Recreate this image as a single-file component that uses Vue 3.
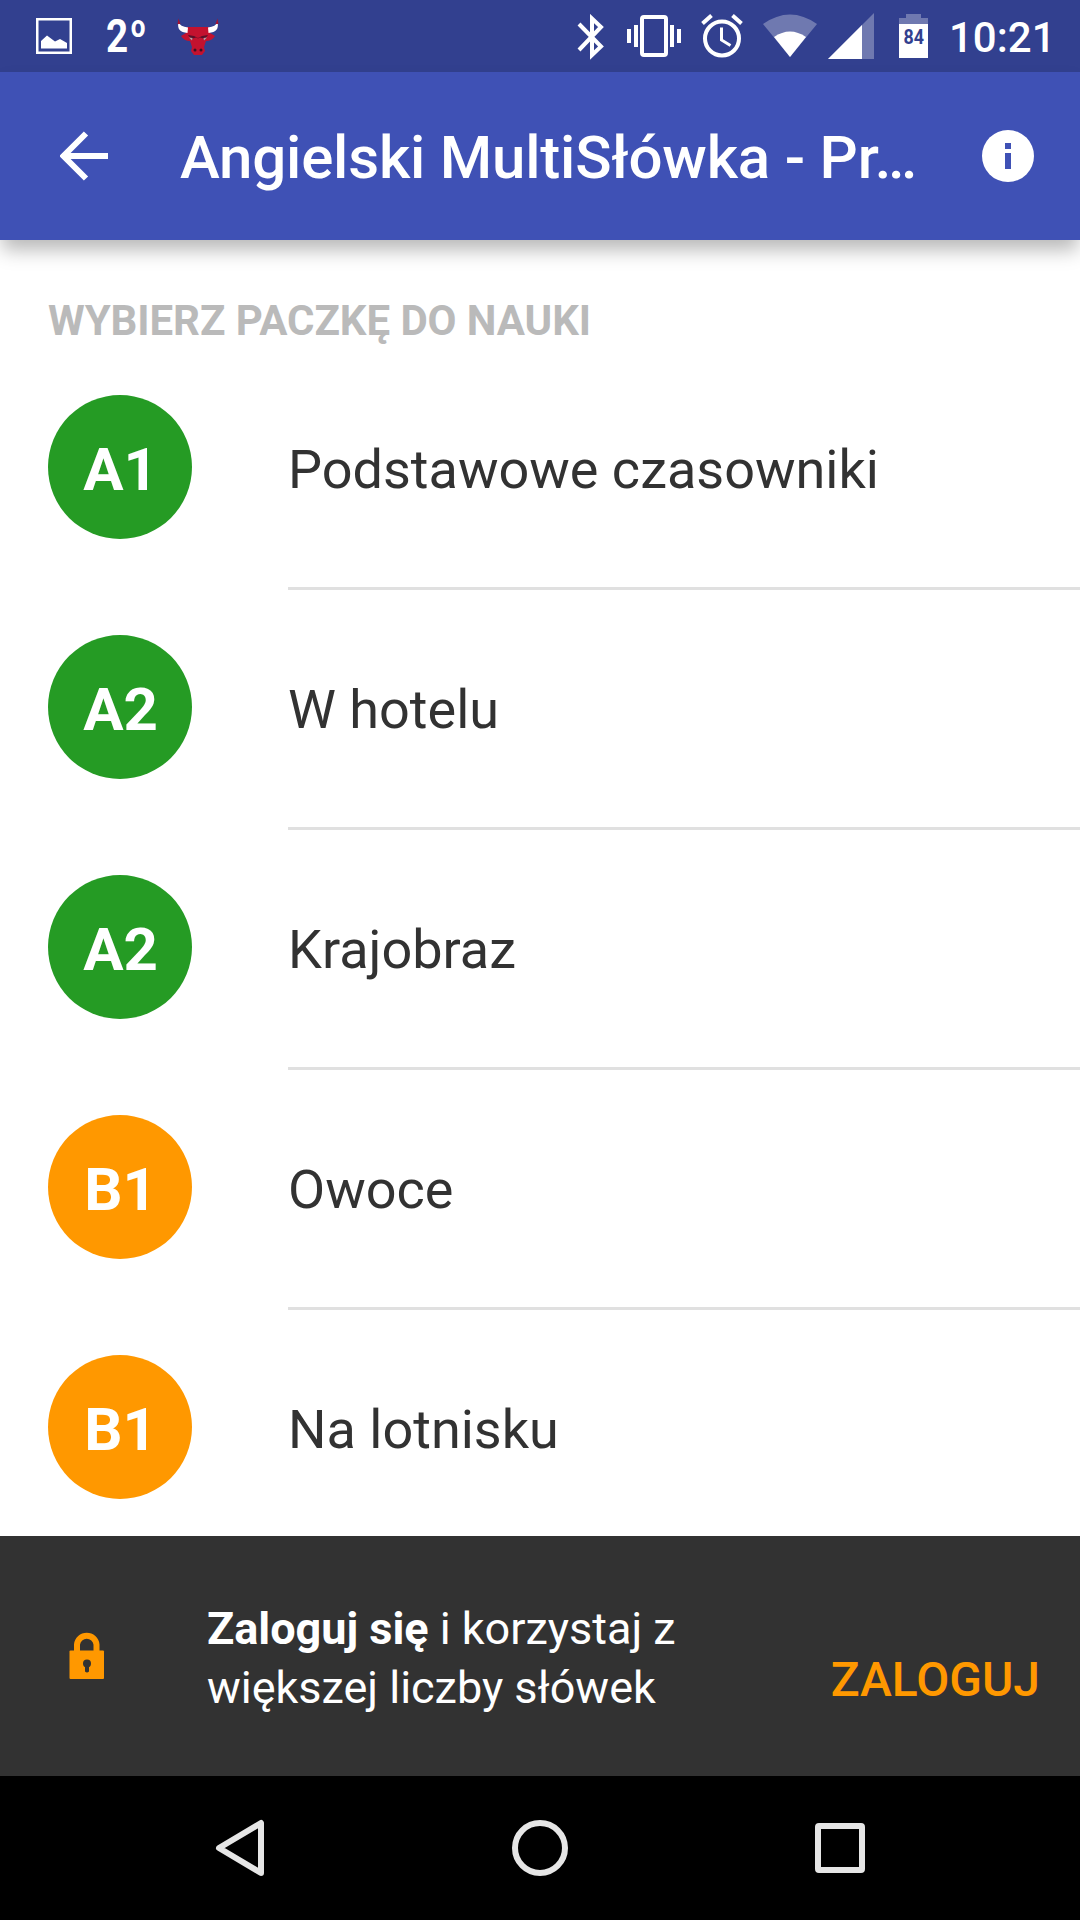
<template>
  <div class="screen">
    <header class="status-bar">
      <div class="notifications">
        <svg class="picture-icon" width="36" height="36" viewBox="0 0 36 36">
          <rect x="1.25" y="1.25" width="33.5" height="33.5" fill="none" stroke="#fff" stroke-width="2.5" />
          <path d="M5 30.5V23l6-5.500 8 6 5-2.500 7 4v5.500z" fill="#fff" />
        </svg>
        <span class="temperature">2<span class="degree">o</span></span>
        <svg class="bull-icon" width="44" height="40" viewBox="0 0 44 40">
          <path d="M11 10h22l1 6 5 3q-3 5-9 5l-2 6 1 4-3 4h-8l-3-4 1-4-2-6q-6 0-9-5l5-3z" fill="#c3122f" />
          <path d="M2.500 5Q4 9.500 12 10.500l-.5 5.500Q0 15 2.500 5zM41.500 5Q40 9.500 32 10.500l.5 5.500Q44 15 41.500 5z" fill="#fff" />
          <path d="M1.500 7l1-5.500L4.500 7zM42.500 7l-1-5.500L39.500 7z" fill="#a31433" />
          <path d="M12 18l6 1 4 2 4-2 6-1-3 4-5-1.500-2 1-2-1-5 1.500z" fill="#5b1029" />
          <path d="M13 20.500l3.500.5-.5 2.500zM31 20.500l-3.500.5.5 2.500z" fill="#b5a0a8" />
          <circle cx="19" cy="33" r="1.500" fill="#3b1024" />
          <circle cx="25" cy="33" r="1.500" fill="#3b1024" />
        </svg>
      </div>
      <div class="indicators">
        <svg class="bluetooth-icon" width="28" height="46" viewBox="0 0 28 46">
          <path d="M2 10l22 22.500-9 8.500V4.500l9 8.500L2 36" fill="none" stroke="#fff" stroke-width="4" />
        </svg>
        <svg class="vibrate-icon" width="54" height="42" viewBox="0 0 54 42">
          <rect x="15" y="2" width="24" height="38" rx="2" fill="none" stroke="#fff" stroke-width="4" />
          <path d="M0 14h4v14H0zM7 10h4v22H7zM43 10h4v22h-4zM50 14h4v14h-4z" fill="#fff" />
        </svg>
        <svg class="alarm-icon" width="42" height="44" viewBox="0 0 42 44">
          <circle cx="21" cy="24.500" r="17" fill="none" stroke="#fff" stroke-width="4" />
          <path d="M1.500 9.500l9-8M40.500 9.500l-9-8" stroke="#fff" stroke-width="4" />
          <path d="M20.500 13.500V26l9 5.500" fill="none" stroke="#fff" stroke-width="3" />
        </svg>
        <svg class="wifi-icon" width="54" height="44" viewBox="0 0 54 44">
          <path d="M0 10Q27-9 54 10L27 43z" fill="#fff" opacity=".3" />
          <path d="M11 23q16-11 32 0L27 43z" fill="#fff" />
        </svg>
        <svg class="signal-icon" width="46" height="46" viewBox="0 0 46 46">
          <path d="M0 46L46 0v46z" fill="#fff" opacity=".3" />
          <path d="M0 46l34-34v34z" fill="#fff" />
        </svg>
        <svg class="battery-icon" width="30" height="44" viewBox="0 0 30 44">
          <path d="M0 4h7V0h15v4h7v6H0z" fill="#fff" opacity=".3" />
          <path d="M0 10h29v34H0z" fill="#fff" />
          <text x="4.500" y="30" textLength="20.5" lengthAdjust="spacingAndGlyphs" class="battery-level">84</text>
        </svg>
        <span class="clock">10:21</span>
      </div>
    </header>

    <div class="app-bar">
      <svg class="back-icon" width="48" height="50" viewBox="0 0 48 50">
        <path d="M48 25H4M26 2.500L3.500 25 26 47.500" fill="none" stroke="#fff" stroke-width="6" />
      </svg>
      <h1>{{ title }}</h1>
      <svg class="info-icon" width="52" height="52" viewBox="0 0 52 52">
        <circle cx="26" cy="26" r="26" fill="#fff" />
        <path d="M23 13h6v6h-6zM23 23h6v16h-6z" fill="#3f51b5" />
      </svg>
    </div>

    <main class="content">
      <h2>WYBIERZ PACZKĘ DO NAUKI</h2>
      <ul class="packs">
        <li v-for="pack in packs" :key="pack.name" class="pack">
          <span class="badge" :class="pack.level.startsWith('A') ? 'green' : 'orange'">{{ pack.level }}</span>
          <span class="name">{{ pack.name }}</span>
        </li>
      </ul>
    </main>

    <div class="login-bar">
      <svg class="lock-icon" width="36" height="48" viewBox="0 0 36 48">
        <path d="M8 22V13.500a9.800 9.800 0 0 1 19.500 0V22" fill="none" stroke="#ff9800" stroke-width="6" />
        <rect x="0.500" y="19.500" width="34.500" height="28.500" rx="1" fill="#ff9800" />
        <circle cx="18" cy="32.500" r="4" fill="#323232" />
        <path d="M16 33h4v7.500q-2 2-4 0z" fill="#323232" />
      </svg>
      <p><b>Zaloguj się</b> i korzystaj z<br />większej liczby słówek</p>
      <button type="button">ZALOGUJ</button>
    </div>

    <nav class="nav-bar">
      <svg width="60" height="60" viewBox="0 0 60 60">
        <path d="M51 5v50L9 30z" />
      </svg>
      <svg width="60" height="60" viewBox="0 0 60 60">
        <circle cx="30" cy="30" r="25" />
      </svg>
      <svg width="60" height="60" viewBox="0 0 60 60">
        <rect x="8" y="8" width="44" height="44" rx="1" />
      </svg>
    </nav>
  </div>
</template>

<script setup>
import { ref } from 'vue'

const title = ref('Angielski MultiSłówka - Pr…')

const packs = ref([
  { level: 'A1', name: 'Podstawowe czasowniki' },
  { level: 'A2', name: 'W hotelu' },
  { level: 'A2', name: 'Krajobraz' },
  { level: 'B1', name: 'Owoce' },
  { level: 'B1', name: 'Na lotnisku' },
])
</script>

<style>
body {
  margin: 0;
  background: #fff;
}
</style>

<style scoped>
.screen {
  display: flex;
  flex-direction: column;
  width: 1080px;
  height: 1920px;
  overflow: hidden;
  background: #fff;
  color: #323232;
  font-family: Roboto, sans-serif;
}

svg {
  display: block;
  flex: none;
}

.status-bar {
  display: flex;
  flex: none;
  justify-content: space-between;
  height: 72px;
  background: #32408f;
  color: #fff;
}

.notifications,
.indicators {
  display: flex;
  align-items: flex-start;
}

.picture-icon {
  margin: 18px 0 0 36px;
}

.temperature {
  display: flex;
  width: 40px;
  margin: 9px 0 0 34px;
  font-size: 46px;
  font-weight: 700;
  line-height: 54px;
  transform: scaleX(0.84);
  transform-origin: left;
}

.degree {
  margin: -9px 0 0 3px;
  font-size: 31px;
}

.bull-icon {
  margin: 17px 0 0 30px;
}

.bluetooth-icon {
  margin-top: 14px;
}

.vibrate-icon {
  margin: 15px 0 0 22px;
}

.alarm-icon {
  margin: 14px 0 0 20px;
}

.wifi-icon {
  margin: 14px 0 0 20px;
}

.signal-icon {
  margin: 13px 0 0 11px;
}

.battery-icon {
  margin: 14px 0 0 25px;
}

.battery-level {
  fill: #32408f;
  font-size: 21px;
  font-weight: 700;
}

.clock {
  width: 131px;
  margin: 13px 0 0 20px;
  font-size: 42px;
  font-weight: 500;
  line-height: 50px;
}

.app-bar {
  display: flex;
  position: relative;
  z-index: 1;
  flex: none;
  align-items: center;
  box-sizing: border-box;
  height: 168px;
  padding: 0 46px 0 60px;
  background: #3f51b5;
  box-shadow: 0 12px 18px -2px rgba(0, 0, 0, 0.28);
  color: #fff;
}

h1 {
  flex: 1;
  margin: 4px 0 0 72px;
  font-size: 60px;
  font-weight: 500;
  letter-spacing: -0.2px;
  line-height: 70px;
  white-space: nowrap;
}

.content {
  flex: 1;
  min-height: 0;
  overflow: hidden;
}

h2 {
  margin: 56px 48px 0;
  color: #bababa;
  font-size: 42px;
  font-weight: 700;
  letter-spacing: -0.08px;
  line-height: 50px;
}

.packs {
  margin: 1px 0 0;
  padding: 0;
  list-style: none;
}

.pack {
  display: flex;
  align-items: center;
  height: 240px;
  padding-left: 48px;
}

.badge {
  flex: none;
  box-sizing: border-box;
  width: 144px;
  height: 144px;
  margin-right: 96px;
  padding-left: 1px;
  border-radius: 50%;
  color: #fff;
  font-size: 60px;
  font-weight: 700;
  line-height: 149px;
  text-align: center;
}

.green {
  background: #259b24;
}

.orange {
  background: #ff9800;
}

.name {
  flex: 1;
  height: 243px;
  border-bottom: 3px solid #e0e0e0;
  font-size: 54px;
  line-height: 251px;
}

.login-bar {
  display: flex;
  flex: none;
  box-sizing: border-box;
  height: 240px;
  padding: 0 40px 0 69px;
  background: #323232;
  color: #fff;
}

.lock-icon {
  margin-top: 95px;
}

.login-bar p {
  flex: 1;
  margin: 63px 0 0 102px;
  font-size: 45px;
  letter-spacing: -0.02px;
  line-height: 59px;
  white-space: nowrap;
}

.login-bar button {
  height: 58px;
  margin: 115px 0 0;
  padding: 0;
  border: none;
  background: none;
  color: #ff9800;
  font-family: inherit;
  font-size: 48px;
  font-weight: 500;
  line-height: 58px;
}

.nav-bar {
  display: flex;
  flex: none;
  align-items: center;
  justify-content: center;
  gap: 240px;
  height: 144px;
  background: #000;
}

.nav-bar svg {
  fill: none;
  stroke: #e6e6e6;
  stroke-width: 6;
  stroke-linejoin: round;
}
</style>
